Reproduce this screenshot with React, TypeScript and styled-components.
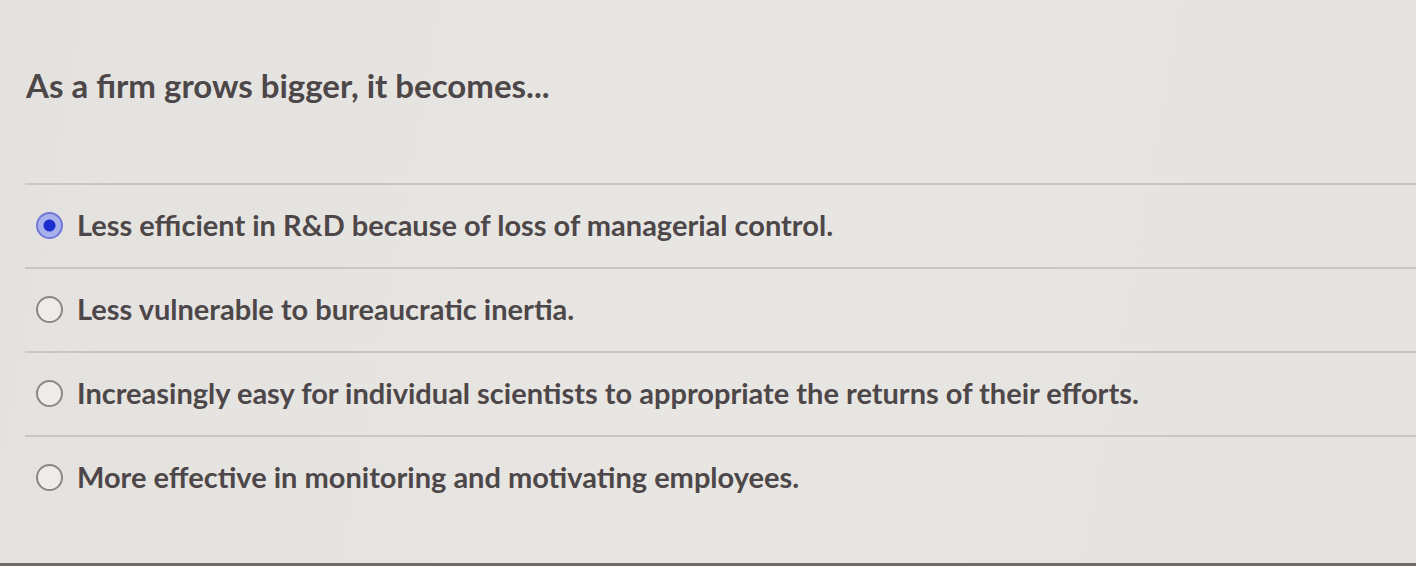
import React, { useState } from 'react';
import styled, { createGlobalStyle } from 'styled-components';

const GlobalStyle = createGlobalStyle`
  html, body {
    margin: 0;
    padding: 0;
    background: #e5e3e0;
  }
  body {
    font-family: Lato, 'Liberation Sans', sans-serif;
  }
`;

const options = [
  'Less efficient in R&D because of loss of managerial control.',
  'Less vulnerable to bureaucratic inertia.',
  'Increasingly easy for individual scientists to appropriate the returns of their efforts.',
  'More effective in monitoring and motivating employees.',
];

const App: React.FC = () => {
  const [picked, setPicked] = useState(0);

  return (
    <>
      <GlobalStyle />
      <Page>
        <Question>As a firm grows bigger, it becomes...</Question>
        <OptionList>
          {options.map((text, i) => (
            <Option key={i} onClick={() => setPicked(i)}>
              <Radio checked={picked === i} />
              <Label>{text}</Label>
            </Option>
          ))}
        </OptionList>
        <BottomEdge />
      </Page>
    </>
  );
};

export default App;

const Page = styled.div`
  width: 1416px;
  height: 566px;
  background: linear-gradient(100deg, #e4e2df 0%, #e8e6e3 50%, #e5e3e0 100%);
  display: flex;
  flex-direction: column;
  position: relative;
  overflow: hidden;
`;

const Question = styled.h1`
  margin: 0;
  padding: 66px 0 0 26px;
  height: 117px;
  box-sizing: border-box;
  font-size: 33px;
  font-weight: 700;
  line-height: 38px;
  color: #4d4749;
`;

const OptionList = styled.div`
  display: flex;
  flex-direction: column;
  margin-top: 66px;
`;

const Option = styled.label`
  display: flex;
  align-items: center;
  gap: 14px;
  height: 84px;
  margin-left: 25px;
  padding-left: 11px;
  padding-bottom: 2px;
  border-top: 2px solid #c9c7c4;
  box-sizing: border-box;
  cursor: pointer;
`;

const Radio = styled.span<{ checked: boolean }>`
  width: 27px;
  height: 27px;
  border-radius: 50%;
  box-sizing: border-box;
  flex-shrink: 0;
  border: 2px solid ${p => (p.checked ? '#6f78d8' : '#8a8787')};
  background: ${p =>
    p.checked
      ? 'radial-gradient(circle, #1b2fd0 0 5.5px, #a9b1ec 6.5px 100%)'
      : '#eeecea'};
`;

const Label = styled.span`
  font-size: 29px;
  font-weight: 700;
  line-height: 34px;
  color: #4d4749;
`;

const BottomEdge = styled.div`
  position: absolute;
  left: 0;
  right: 0;
  bottom: 0;
  height: 3px;
  background: #6e6b6a;
`;
